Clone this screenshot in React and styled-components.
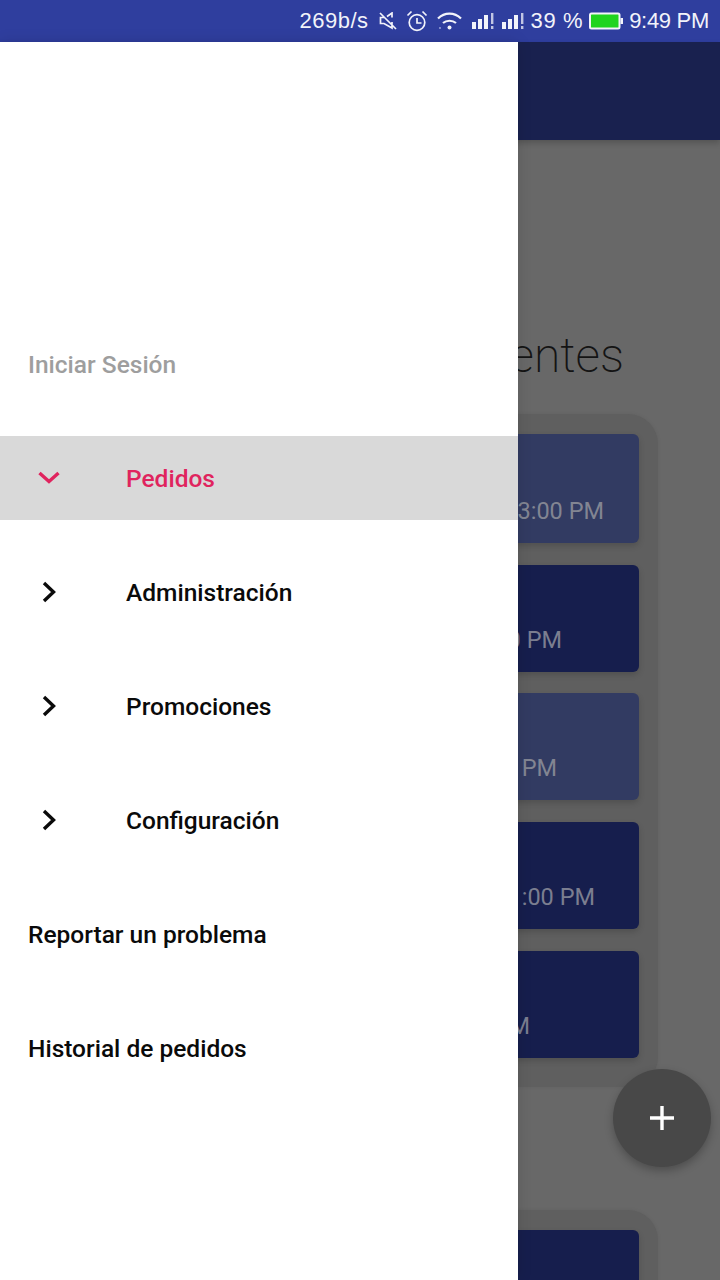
import styled, { createGlobalStyle } from "styled-components";

const GlobalStyle = createGlobalStyle`
  html, body {
    margin: 0;
    padding: 0;
    background: #696969;
  }
  * {
    box-sizing: border-box;
  }
`;

const Screen = styled.div`
  position: relative;
  width: 720px;
  height: 1280px;
  overflow: hidden;
  background: #686868;
  font-family: Roboto, "Noto Sans", sans-serif;
`;

const StatusBar = styled.div`
  height: 42px;
  background: #2f3e9e;
  color: #f2f3fa;
  display: flex;
  align-items: center;
  justify-content: flex-end;
  padding-right: 11px;
  font-family: "Liberation Sans", Arial, sans-serif;
  font-size: 22px;
`;

const StatusText = styled.span`
  margin-left: ${(p) => p.$gap || 0}px;
  letter-spacing: ${(p) => p.$spacing || 0}px;
  white-space: nowrap;
`;

const StatusIcon = styled.svg`
  display: block;
  flex: none;
  margin-left: ${(p) => p.$gap || 0}px;
`;

const Drawer = styled.nav`
  position: absolute;
  left: 0;
  top: 42px;
  bottom: 0;
  width: 518px;
  background: #fff;
  box-shadow: 0 0 14px rgba(0, 0, 0, 0.12);
  padding-top: 302px;
  display: flex;
  flex-direction: column;
  font-size: 24.5px;
  font-weight: 500;
`;

const Login = styled.div`
  height: 92px;
  padding: 7px 0 0 28px;
  color: #9e9e9e;
  line-height: 28px;
`;

const MenuItem = styled.div`
  height: 114px;
`;

const MenuRow = styled.div`
  height: 84px;
  display: flex;
  align-items: center;
  padding-left: ${(p) => (p.$plain ? 28 : 36)}px;
  background: ${(p) => (p.$active ? "#d9d9d9" : "transparent")};
  color: ${(p) => (p.$active ? "#e0245e" : "#0a0a0a")};
`;

const Chevron = styled.svg`
  width: 26px;
  height: 26px;
  flex: none;
  margin-right: 64px;
`;

const AppBar = styled.div`
  height: 98px;
  background: #19214f;
  box-shadow: 0 3px 6px rgba(0, 0, 0, 0.2);
`;

const Title = styled.div`
  margin-top: 184px;
  height: 90px;
  padding-right: 96px;
  text-align: right;
  font-size: 48px;
  font-weight: 200;
  line-height: 64px;
  color: #141414;
`;

const Group = styled.div`
  width: 596px;
  margin-left: 62px;
  padding: 20px 19px 29px;
  border-radius: 30px;
  background: #5f5f5f;
  box-shadow: 0 0 4px rgba(0, 0, 0, 0.06);
  display: flex;
  flex-direction: column;
  gap: 21.67px;
`;

const LastGroup = styled(Group)`
  margin-top: 123px;
`;

const Slot = styled.div`
  height: ${(p) => (p.$tall ? 109 : 107)}px;
  padding: ${(p) => (p.$tall ? 60 : 58)}px ${(p) => p.$right || 0}px 0 0;
  background: ${(p) => (p.$light ? "#323b62" : "#161e4d")};
  border-radius: 6px;
  box-shadow: 0 3px 6px rgba(0, 0, 0, 0.16);
  color: ${(p) => (p.$light ? "#828592" : "#7b7e90")};
  font-size: 23.5px;
  line-height: 34px;
  text-align: right;
  white-space: nowrap;
`;

const Fab = styled.div`
  position: absolute;
  left: 613px;
  top: 1069px;
  width: 98px;
  height: 98px;
  border-radius: 50%;
  background: #484848;
  box-shadow: 0 4px 8px rgba(0, 0, 0, 0.25);
  display: flex;
  align-items: center;
  justify-content: center;
`;

const slots = [
  { text: "3:00 PM", right: 35, light: true, tall: true },
  { text: "0 PM", right: 77, light: false },
  { text: "PM", right: 82, light: true },
  { text: ":00 PM", right: 44, light: false },
  { text: "M", right: 109, light: false },
];

const menu = ["Administración", "Promociones", "Configuración"];

const RightChevron = () => (
  <Chevron viewBox="0 0 26 26" fill="none" stroke="#0a0a0a" strokeWidth="3.4">
    <path d="M8 4 L17.5 13 L8 22" />
  </Chevron>
);

const DownChevron = () => (
  <Chevron viewBox="0 0 26 26" fill="none" stroke="#e0245e" strokeWidth="3.4">
    <path d="M3.5 8 L13 16.5 L22.5 8" />
  </Chevron>
);

const SignalIcon = ({ gap }) => (
  <StatusIcon $gap={gap} width="22" height="17" viewBox="0 0 22 17" fill="#f2f3fa">
    <rect x="0" y="9" width="4" height="7" />
    <rect x="6" y="6" width="4" height="10" />
    <rect x="12" y="2" width="4" height="14" />
    <g opacity="0.75">
      <rect x="19" y="0" width="2.4" height="11" />
      <rect x="19" y="13" width="2.4" height="3" />
    </g>
  </StatusIcon>
);

const App = () => (
  <Screen>
    <GlobalStyle />
    <StatusBar>
      <StatusText $spacing={0.5}>269b/s</StatusText>
      <StatusIcon $gap={10} width="18" height="18" viewBox="0 0 18 18" fill="none" stroke="#f2f3fa" strokeWidth="1.7">
        <path d="M1 1 L17 17 M5 5.5 H1.5 V11.5 H5 L13 16 V10 M13 5.5 V1 L8 4.5" />
      </StatusIcon>
      <StatusIcon $gap={9} width="22" height="22" viewBox="0 0 22 22" fill="none" stroke="#f2f3fa" strokeWidth="1.7">
        <circle cx="11" cy="12.5" r="7.8" />
        <path d="M11 8 V13 H15.5 M1.5 5.5 L5.5 1.5 M20.5 5.5 L16.5 1.5" />
      </StatusIcon>
      <StatusIcon $gap={9} width="25" height="18" viewBox="0 0 25 18" fill="none" stroke="#f2f3fa" strokeWidth="2.2">
        <path d="M1 6.5 C7.5 0 17.5 0 24 6.5 M6 11 C9.5 8 15.5 8 19 11" />
        <circle cx="12.5" cy="15.5" r="2" fill="#f2f3fa" stroke="none" />
        <circle cx="3" cy="16" r="1" fill="#9aa2d8" stroke="none" />
      </StatusIcon>
      <SignalIcon gap={10} />
      <SignalIcon gap={8} />
      <StatusText $gap={7} $spacing={0.6}>39 %</StatusText>
      <StatusIcon $gap={6} width="34" height="18" viewBox="0 0 34 18">
        <rect x="1" y="1.5" width="29.5" height="15" rx="1.5" fill="#1fd41f" stroke="#f2f3fa" strokeWidth="2" />
        <rect x="31.5" y="6" width="2.5" height="6" fill="#f2f3fa" />
      </StatusIcon>
      <StatusText $gap={6} $spacing={-0.3}>9:49 PM</StatusText>
    </StatusBar>
    <AppBar />
    <Title>Pendientes</Title>
    <Group>
      {slots.map((s) => (
        <Slot key={s.text} $light={s.light} $right={s.right} $tall={s.tall}>
          {s.text}
        </Slot>
      ))}
    </Group>
    <LastGroup>
      <Slot />
    </LastGroup>
    <Fab>
      <svg width="26" height="26" viewBox="0 0 26 26" stroke="#fff" strokeWidth="3.4">
        <path d="M13 1 V25 M1 13 H25" />
      </svg>
    </Fab>
    <Drawer>
      <Login>Iniciar Sesión</Login>
      <MenuItem>
        <MenuRow $active>
          <DownChevron />
          Pedidos
        </MenuRow>
      </MenuItem>
      {menu.map((label) => (
        <MenuItem key={label}>
          <MenuRow>
            <RightChevron />
            {label}
          </MenuRow>
        </MenuItem>
      ))}
      <MenuItem>
        <MenuRow $plain>Reportar un problema</MenuRow>
      </MenuItem>
      <MenuItem>
        <MenuRow $plain>Historial de pedidos</MenuRow>
      </MenuItem>
    </Drawer>
  </Screen>
);

export default App;
